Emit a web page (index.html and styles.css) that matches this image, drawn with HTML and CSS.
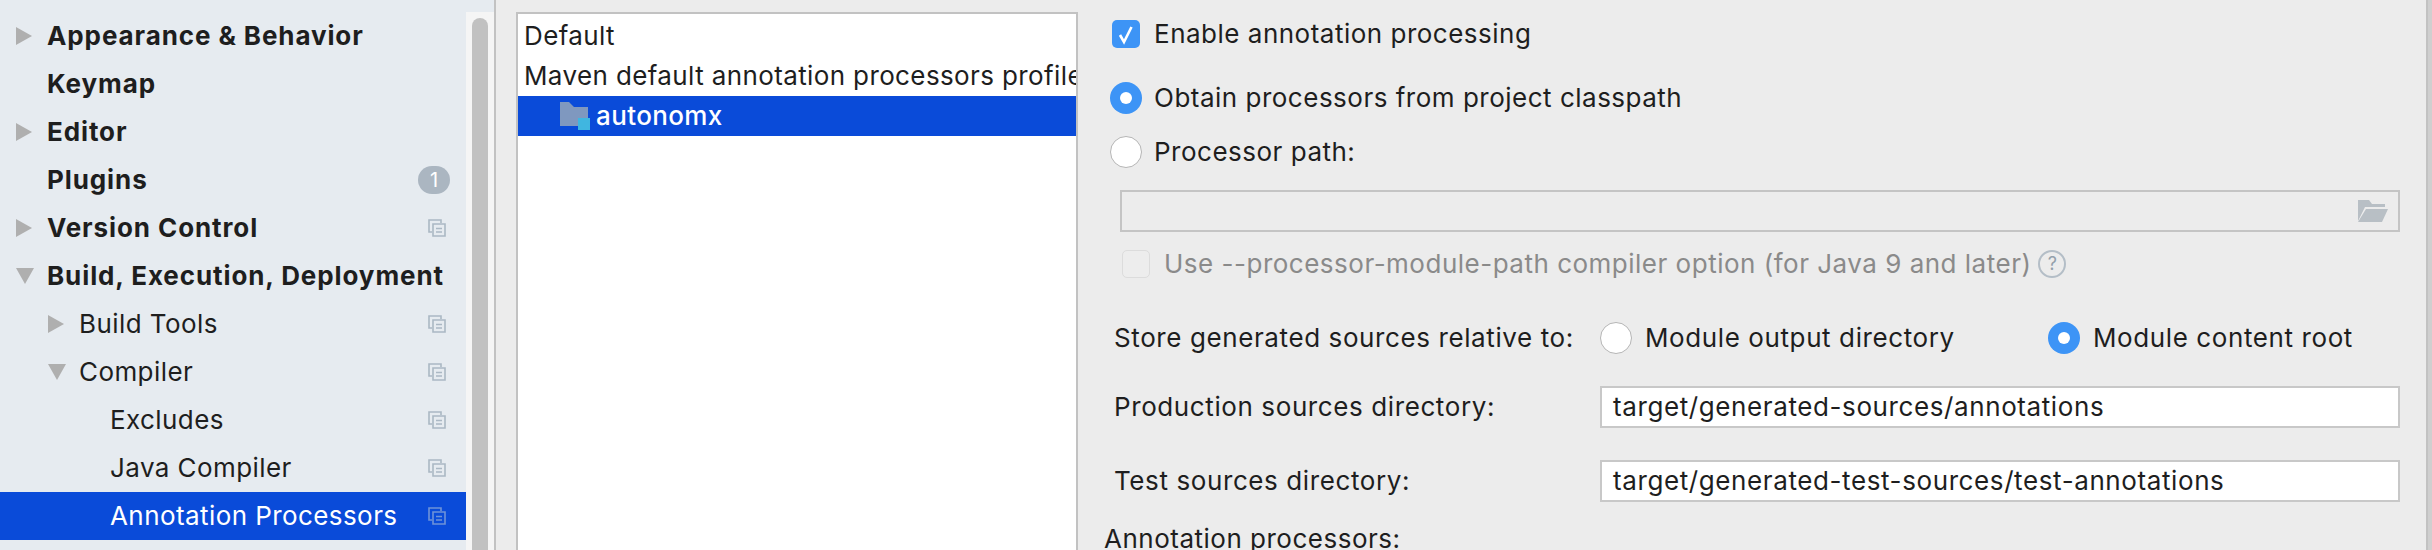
FILE: index.html
```html
<!DOCTYPE html>
<html lang="en">
<head>
<meta charset="utf-8">
<title>Annotation Processors</title>
<link rel="stylesheet" href="styles.css">
</head>
<body>
<svg class="defs" aria-hidden="true">
  <symbol id="right" viewBox="0 0 16 18"><polygon points="0,0 16,9 0,18"/></symbol>
  <symbol id="down" viewBox="0 0 18 16"><polygon points="0,0 18,0 9,16"/></symbol>
  <symbol id="copy" viewBox="0 0 18 18"><path d="M4 13H1V1h12v3M5 5h12v12H5zM8 9.5h6M8 13h6" fill="none" stroke="currentColor" stroke-width="1.6"/></symbol>
</svg>
<nav class="sidebar">
  <div class="item top"><svg class="arrow r"><use href="#right"/></svg><span>Appearance &amp; Behavior</span></div>
  <div class="item top"><span class="slot"></span><span>Keymap</span></div>
  <div class="item top"><svg class="arrow r"><use href="#right"/></svg><span>Editor</span></div>
  <div class="item top"><span class="slot"></span><span>Plugins</span><span class="badge">1</span></div>
  <div class="item top"><svg class="arrow r"><use href="#right"/></svg><span>Version Control</span><svg class="copy"><use href="#copy"/></svg></div>
  <div class="item top"><svg class="arrow d"><use href="#down"/></svg><span>Build, Execution, Deployment</span></div>
  <div class="item l2"><svg class="arrow r"><use href="#right"/></svg><span>Build Tools</span><svg class="copy"><use href="#copy"/></svg></div>
  <div class="item l2"><svg class="arrow d"><use href="#down"/></svg><span>Compiler</span><svg class="copy"><use href="#copy"/></svg></div>
  <div class="item l3"><span>Excludes</span><svg class="copy"><use href="#copy"/></svg></div>
  <div class="item l3"><span>Java Compiler</span><svg class="copy"><use href="#copy"/></svg></div>
  <div class="item l3 selected"><span>Annotation Processors</span><svg class="copy"><use href="#copy"/></svg></div>
</nav>
<div class="scroll"><div class="track"><div class="thumb"></div></div></div>
<div class="sep"></div>
<main class="main">
  <section class="list">
    <div class="profile">Default</div>
    <div class="profile">Maven default annotation processors profile</div>
    <div class="profile chosen">
      <svg class="module" viewBox="0 0 30 28"><path d="M0 0h9l5 5h14v19H0z" fill="#7f98bf"/><rect x="18" y="16" width="12" height="12" fill="#40b6e0"/></svg>
      <span>autonomx</span>
    </div>
  </section>
  <section class="form">
    <div class="line enable">
      <span class="checkbox"><svg viewBox="0 0 28 28"><path d="M8 15l4 7 7.5-15" fill="none" stroke="#fff" stroke-width="2.6"/></svg></span>
      <span>Enable annotation processing</span>
    </div>
    <div class="line choice first"><span class="radio on"></span><span>Obtain processors from project classpath</span></div>
    <div class="line choice second"><span class="radio"></span><span>Processor path:</span></div>
    <div class="path">
      <svg class="open" viewBox="0 0 30 22"><path d="M0 0h11l3 4h13v3H7L0 21z" fill="#b8bfc5"/><path d="M8 9h22l-6 13H0z" fill="#b8bfc5"/></svg>
    </div>
    <div class="line disabled">
      <span class="checkbox off"></span>
      <span>Use --processor-module-path compiler option (for Java 9 and later)</span>
      <span class="help">?</span>
    </div>
    <div class="fields">
      <div class="label">Store generated sources relative to:</div>
      <div class="options">
        <div class="line option wide"><span class="radio"></span><span>Module output directory</span></div>
        <div class="line option"><span class="radio on"></span><span>Module content root</span></div>
      </div>
      <div class="label">Production sources directory:</div>
      <div class="input">target/generated-sources/annotations</div>
      <div class="label">Test sources directory:</div>
      <div class="input">target/generated-test-sources/test-annotations</div>
    </div>
    <div class="heading">Annotation processors:</div>
  </section>
</main>
<div class="sep"></div>
<div class="edge"></div>
</body>
</html>
```
FILE: styles.css
```css
* { box-sizing: border-box; }
html, body { margin: 0; height: 550px; overflow: hidden; }
body {
  display: flex;
  width: 2432px;
  background: #ececec;
  color: #1e1e1e;
  font: 400 26px/32px Inter, "Liberation Sans", sans-serif;
  letter-spacing: 0.5px;
}
.defs { position: absolute; width: 0; height: 0; }

.sidebar {
  flex: none;
  width: 466px;
  height: 550px;
  padding-top: 12px;
  background: #e6ebf0;
}
.item {
  display: flex;
  align-items: center;
  height: 48px;
  padding-right: 16px;
  letter-spacing: 0.42px;
  white-space: nowrap;
}
.item.top { padding-left: 16px; font-weight: 700; letter-spacing: 0.9px; }
.item.l2 { padding-left: 47px; }
.item.l3 { padding-left: 110px; }
.slot { flex: none; width: 31px; }
.arrow { flex: none; fill: #afafaf; }
.arrow.r { width: 16px; height: 18px; margin-right: 15px; }
.arrow.d { width: 18px; height: 16px; margin-right: 13px; }
.item.l2 .arrow { margin-left: 1px; }
.item.l2 .arrow.r { margin-right: 15px; }
.badge {
  margin-left: auto;
  width: 32px;
  height: 28px;
  border-radius: 14px;
  background: #abb6c1;
  color: #fff;
  font-size: 20px;
  font-weight: 400;
  line-height: 28px;
  text-align: center;
  letter-spacing: 0;
}
.copy {
  flex: none;
  width: 18px;
  height: 18px;
  margin-left: auto;
  margin-right: 4px;
  color: #abb8c4;
}
.item.selected { background: #0a4bd9; color: #fff; }
.item.selected .copy { color: #6e93d8; }

.scroll { flex: none; width: 28px; padding-top: 12px; background: #e6ebf0; }
.track { height: 538px; padding: 6px 6px 0; background: #f5f5f5; }
.thumb { width: 16px; height: 100%; border-radius: 8px 8px 0 0; background: #c1c1c1; }
.sep { flex: none; width: 2px; background: #c2c2c2; }
.edge { flex: 1; background: #cfcfcf; }

.main { flex: none; display: flex; width: 1930px; height: 550px; padding-left: 20px; }
.list {
  flex: none;
  width: 562px;
  height: 560px;
  margin-top: 12px;
  padding-top: 2px;
  overflow: hidden;
  border: 2px solid #c2c2c2;
  background: #fff;
  letter-spacing: 0.38px;
}
.profile {
  display: flex;
  align-items: center;
  height: 40px;
  padding-left: 6px;
  white-space: nowrap;
}
.chosen { padding-left: 42px; background: #0a4bd9; color: #fff; font-weight: 500; }
.module { flex: none; width: 30px; height: 28px; margin-right: 6px; }

.form { flex: 1; padding: 20px 26px 0 26px; }
.line { display: flex; align-items: center; white-space: nowrap; }
.checkbox {
  flex: none;
  width: 28px;
  height: 28px;
  border-radius: 5px;
  background: #3d94f6;
}
.checkbox svg { display: block; width: 28px; height: 28px; }
.checkbox.off { background: #ededed; border: 1px solid #dcdcdc; }
.radio {
  flex: none;
  position: relative;
  width: 32px;
  height: 32px;
  border-radius: 50%;
  background: #fff;
  border: 1px solid #b5b5b5;
}
.radio.on { background: #3d94f6; border: 0; }
.radio.on::after {
  content: "";
  position: absolute;
  left: 10px;
  top: 10px;
  width: 12px;
  height: 12px;
  border-radius: 50%;
  background: #fff;
}
.enable { height: 28px; margin-left: 8px; gap: 14px; }
.choice { height: 32px; margin-left: 6px; gap: 12px; }
.choice.first { margin-top: 34px; }
.choice.second { margin-top: 22px; }
.path {
  display: flex;
  align-items: center;
  justify-content: flex-end;
  height: 42px;
  margin: 22px 0 0 16px;
  padding-right: 10px;
  border: 2px solid #c4c4c4;
}
.open { width: 30px; height: 22px; }
.disabled { height: 28px; margin: 18px 0 0 18px; gap: 14px; color: #8a8a8a; }
.help {
  width: 28px;
  height: 28px;
  margin-left: -7px;
  border: 2px solid #b4bec7;
  border-radius: 50%;
  color: #93a0ab;
  font-size: 18px;
  line-height: 24px;
  text-align: center;
  letter-spacing: 0;
}
.fields {
  display: grid;
  grid-template-columns: 486px 800px;
  grid-template-rows: 32px 42px 42px;
  row-gap: 32px;
  align-items: center;
  margin: 44px 0 0 10px;
  letter-spacing: 0.6px;
}
.label { white-space: nowrap; }
.options { display: flex; }
.option { gap: 13px; }
.option.wide { width: 448px; }
.input {
  height: 42px;
  padding-left: 11px;
  border: 2px solid #c8c8c8;
  background: #fff;
  line-height: 38px;
  white-space: nowrap;
}
.heading { margin-top: 21px; white-space: nowrap; }
```
